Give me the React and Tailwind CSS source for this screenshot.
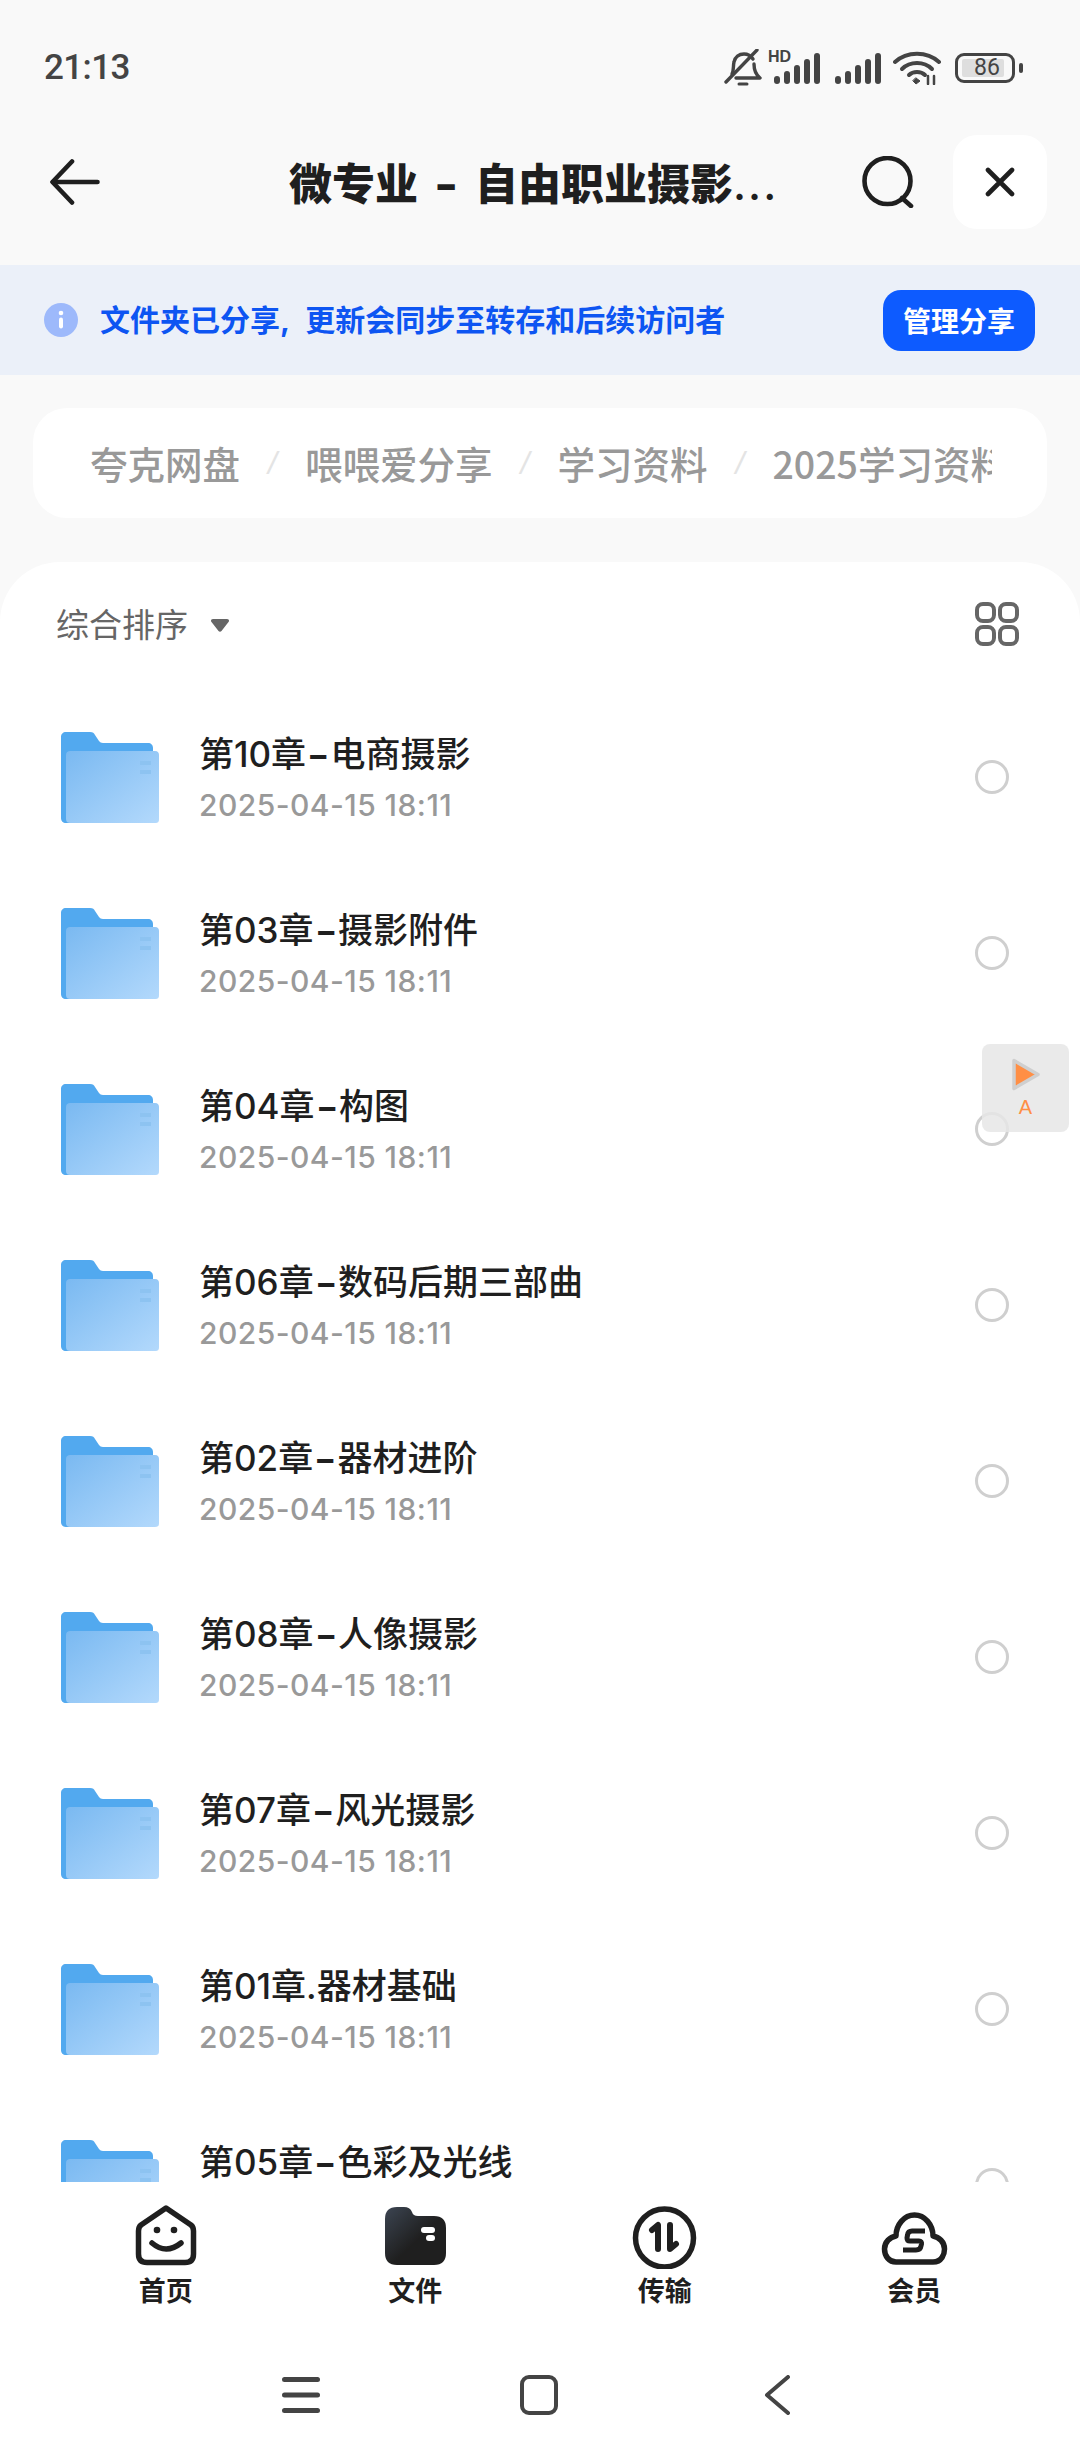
import React from "react";

const cjk = "font-['Noto_Sans_CJK_SC','Noto_Sans',sans-serif]";
const mix = "font-['Inter','Noto_Sans_CJK_SC',sans-serif]";
const files = [
  "第10章-电商摄影",
  "第03章-摄影附件",
  "第04章-构图",
  "第06章-数码后期三部曲",
  "第02章-器材进阶",
  "第08章-人像摄影",
  "第07章-风光摄影",
  "第01章.器材基础",
  "第05章-色彩及光线",
];

function Signal() {
  return (
    <svg width="50" height="32" viewBox="0 0 50 32" fill="#444">
      <rect x="3" y="24" width="6" height="8" rx="3" />
      <rect x="13" y="19" width="6" height="13" rx="3" />
      <rect x="23" y="13" width="6" height="19" rx="3" />
      <rect x="33" y="7" width="6" height="25" rx="3" />
      <rect x="43" y="1" width="6" height="31" rx="3" />
    </svg>
  );
}

function StatusBar() {
  return (
    <div className="flex h-[135px] shrink-0 items-center justify-between pl-[44px] pr-[57px]">
      <span className="font-['Roboto',sans-serif] text-[35px] font-medium leading-none tracking-[-0.6px] text-[#444]">21:13</span>
      <div className="flex items-center">
        <svg width="38" height="38" viewBox="0 0 38 38" fill="none" stroke="#444" strokeWidth="3.4" strokeLinecap="round" strokeLinejoin="round">
          <path d="M8 25C10 21 9 17 10 13C11 8 15 5 20 5C24 5 27 7 29 10" />
          <path d="M30 15C30 20 31 25 36 29H12" />
          <path d="M33 1L2 33" />
          <path d="M15 35H23" strokeWidth="3" />
        </svg>
        <div className="relative ml-[9px] flex h-[32px] w-[50px] items-end">
          <span className="absolute left-[-3px] top-[-3px] font-['Liberation_Sans',sans-serif] text-[16px] font-bold leading-[16px] text-[#444]">HD</span>
          <Signal />
        </div>
        <div className="ml-[11px]"><Signal /></div>
        <svg className="ml-[11px]" width="48" height="34" viewBox="0 0 48 34" fill="none" stroke="#444" strokeWidth="4" strokeLinecap="round">
          <path d="M2 11C14 0 34 0 46 11" />
          <path d="M9 18C17 10 31 10 39 18" />
          <path d="M16 24C20 20 28 20 32 24" />
          <path d="M20 30L23 33L27 30L23 27Z" fill="#444" strokeWidth="1" />
          <path d="M35 25V33M41 25V33" strokeWidth="2.5" />
        </svg>
        <div className="relative ml-[14px] flex h-[30px] w-[68px] items-center">
          <div className="flex h-[30px] w-[60px] items-center rounded-[9px] border-[3px] border-[#444] pl-[4px]">
            <div className="h-[18px] w-[42px] rounded-[2px] bg-[#dedede]" />
          </div>
          <div className="ml-[4px] h-[10px] w-[4px] rounded-[2px] bg-[#444]" />
          <span className="absolute left-[14px] top-0 w-[36px] text-center font-['Roboto',sans-serif] text-[23px] leading-[30px] text-[#444]">86</span>
        </div>
      </div>
    </div>
  );
}

function Header() {
  return (
    <div className="flex h-[94px] shrink-0 items-center pl-[50px] pr-[33px]">
      <svg width="50" height="46" viewBox="0 0 50 46" fill="none" stroke="#1f1f1f" strokeWidth="4.6" strokeLinecap="round" strokeLinejoin="round">
        <path d="M22 2.500L2.500 23L22 43.500" />
        <path d="M3 23H47.500" />
      </svg>
      <span className={`${mix} ml-[189px] mt-[5px] whitespace-nowrap text-[43px] font-extrabold leading-none text-[#1f1f1f] [word-spacing:7px]`}>微专业 <span className="mx-[2px] inline-block scale-x-[1.2]">-</span> 自由职业摄影<span className="font-medium tracking-[2px]">...</span></span>
      <svg className="ml-auto" width="54" height="52" viewBox="0 0 54 52" fill="none" stroke="#1f1f1f" strokeWidth="4.600" strokeLinecap="round">
        <circle cx="26.500" cy="25" r="23" />
        <path d="M41 42L50 50" />
      </svg>
      <div className="ml-[38px] flex h-[94px] w-[94px] items-center justify-center rounded-[24px] bg-white">
        <svg width="30" height="30" viewBox="0 0 30 30" fill="none" stroke="#1f1f1f" strokeWidth="4.600" strokeLinecap="round">
          <path d="M3 3L27 27M27 3L3 27" />
        </svg>
      </div>
    </div>
  );
}

function Banner() {
  return (
    <div className="mt-[36px] flex h-[110px] shrink-0 items-center bg-[#ebf0f9] pl-[44px] pr-[45px]">
      <svg width="34" height="34" viewBox="0 0 34 34">
        <circle cx="17" cy="17" r="17" fill="#9db9fb" />
        <circle cx="17" cy="10" r="2.300" fill="#fff" />
        <rect x="15" y="14.500" width="4" height="11" rx="2" fill="#fff" />
      </svg>
      <span className={`${mix} ml-[22px] whitespace-nowrap text-[30px] font-bold leading-none text-[#0d55f2] [word-spacing:9px]`}>文件夹已分享, 更新会同步至转存和后续访问者</span>
      <div className={`${cjk} ml-auto flex h-[61px] w-[152px] items-center justify-center rounded-[18px] bg-[#0d5bff] text-[28px] font-bold text-white`}>管理分享</div>
    </div>
  );
}

function Sep() {
  return <span className="w-[65px] shrink-0 text-center font-['Liberation_Sans',sans-serif] text-[32px] font-normal italic text-[#e4e4e4]">/</span>;
}

function Breadcrumb() {
  return (
    <div className="mx-[33px] mt-[33px] flex h-[110px] shrink-0 items-center rounded-[34px] bg-white pl-[57px] pr-[55px]">
      <div className={`${cjk} flex items-center overflow-hidden whitespace-nowrap text-[37.5px] font-medium leading-[56px] text-[#999]`}>
        <span className="shrink-0">夸克网盘</span>
        <Sep />
        <span className="shrink-0">喂喂爱分享</span>
        <Sep />
        <span className="shrink-0">学习资料</span>
        <Sep />
        <span className="shrink-0">2025学习资料</span>
      </div>
    </div>
  );
}

function SortRow() {
  return (
    <div className="flex h-[127px] shrink-0 items-center pl-[56px] pr-[61px]">
      <span className={`${cjk} pb-[5px] text-[33px] leading-none text-[#666]`}>综合排序</span>
      <svg className="ml-[23px]" width="18" height="13" viewBox="0 0 18 13" fill="#666">
        <path d="M2 0H16C18 0 18.500 2 17.500 3L10.500 12C9.700 13 8.300 13 7.500 12L0.500 3C-0.500 2 0 0 2 0Z" />
      </svg>
      <svg className="ml-auto -translate-y-[2px]" width="44" height="44" viewBox="0 0 44 44" fill="none" stroke="#666" strokeWidth="4">
        <rect x="2" y="2" width="17" height="17" rx="6" />
        <rect x="25" y="2" width="17" height="17" rx="6" />
        <rect x="2" y="25" width="17" height="17" rx="6" />
        <rect x="25" y="25" width="17" height="17" rx="6" />
      </svg>
    </div>
  );
}

function Folder({ id }) {
  return (
    <svg className="shrink-0" width="100" height="93" viewBox="0 0 100 93">
      <defs>
        <linearGradient id={id} x1="0" y1="0" x2="1" y2="1">
          <stop offset="0" stopColor="#7ab9f1" />
          <stop offset="1" stopColor="#b3d9fc" />
        </linearGradient>
      </defs>
      <path d="M1 6C1 3 3 1 6 1H30C33 1 34 2 35 4L39 10C40 11 41 12 43 12H88C91 12 93 14 93 17V86C93 90 91 92 88 92H6C3 92 1 90 1 87Z" fill="#52a9ef" />
      <path d="M6 24C6 21 8 20 10 20H95C98 20 99 22 99 24V88C99 91 98 92 95 92H10C8 92 6 91 6 88Z" fill={`url(#${id})`} />
      <rect x="80" y="30" width="11" height="4" fill="#8dc3f1" />
      <rect x="80" y="39" width="11" height="4" fill="#8dc3f1" />
    </svg>
  );
}

function Row({ name, i }) {
  const parts = name.split("-");
  return (
    <div className="flex h-[176px] shrink-0 items-center pl-[60px] pr-[71px]">
      <Folder id={`folder-grad-${i}`} />
      <div className="ml-[39px] flex flex-col gap-[6px]">
        <span className={`${mix} text-[35px] font-medium leading-[50px] text-[#1f1f1f]`}>
          {parts[0]}
          {parts.length > 1 && <span className="mx-[4px] inline-block scale-x-[1.4] font-bold">-</span>}
          {parts[1]}
        </span>
        <span className={`${mix} text-[30px] font-medium leading-[40px] tracking-[0.45px] text-[#999]`}>2025-04-15 18:11</span>
      </div>
      <div className="ml-auto h-[34px] w-[34px] rounded-full border-[3px] border-[#cfcfcf]" />
    </div>
  );
}

function TabBar() {
  const stroke = { fill: "none", stroke: "#1f1f1f", strokeWidth: 5.5, strokeLinecap: "round", strokeLinejoin: "round" };
  const tabs = [
    {
      label: "首页",
      icon: (
        <g {...stroke}>
          <path d="M35 3L60 20Q62.500 22 62.500 26V49Q62.500 57.500 54 57.500H16Q7.500 57.500 7.500 49V26Q7.500 22 10 20Z" />
          <circle cx="26" cy="25" r="3.300" fill="#1f1f1f" stroke="none" />
          <circle cx="43" cy="25" r="3.300" fill="#1f1f1f" stroke="none" />
          <path d="M21 38Q35 50 50 38" />
        </g>
      ),
    },
    {
      label: "文件",
      icon: (
        <g>
          <defs>
            <linearGradient id="tab-file" x1="0" y1="0" x2="1" y2="1">
              <stop offset="0" stopColor="#3c4552" />
              <stop offset="0.55" stopColor="#1f1f1f" />
            </linearGradient>
          </defs>
          <path d="M5 14Q5 2 17 2H24Q30 2 32 7Q33 11 38 11H54Q66 11 66 23V48Q66 60 54 60H17Q5 60 5 48Z" fill="url(#tab-file)" />
          <rect x="41" y="22" width="14" height="6" rx="3" fill="#fff" />
          <rect x="46" y="30" width="9" height="6" rx="3" fill="#fff" />
        </g>
      ),
    },
    {
      label: "传输",
      icon: (
        <g {...stroke}>
          <circle cx="34.500" cy="33" r="29" />
          <path d="M22 25L28 20V44" strokeWidth="6" />
          <path d="M40 20V44L46 39" strokeWidth="6" />
        </g>
      ),
    },
    {
      label: "会员",
      icon: (
        <g {...stroke}>
          <path d="M17 57H54C63 57 65.500 49 65.500 44C65.500 37 60 32 54 31C54 20 46 10 35.500 10C25 10 17 20 17 31C11 32 5.500 37 5.500 44C5.500 51 10 57 17 57Z" />
          <path d="M46 26H33Q29 26 28.500 30L28 33Q28 36 31 36H40Q43 36 42.500 39L42 41Q41.500 45 37 45H24" strokeWidth="5" strokeLinecap="butt" />
        </g>
      ),
    },
  ];
  return (
    <div className="grid grid-cols-4 px-[41px] pt-[23px]">
      {tabs.map((t) => (
        <div key={t.label} className="flex flex-col items-center">
          <svg width="70" height="64" viewBox="0 0 70 64">{t.icon}</svg>
          <span className={`${cjk} mt-[6px] text-[27px] font-bold leading-[30px] text-[#1f1f1f]`}>{t.label}</span>
        </div>
      ))}
    </div>
  );
}

function SystemNav() {
  return (
    <div className="mt-[70px] flex gap-[200px] pl-[282px]">
      <svg width="38" height="40" viewBox="0 0 38 40" fill="#444">
        <rect x="0" y="2" width="38" height="5" rx="2.500" />
        <rect x="0" y="17.500" width="38" height="5" rx="2.500" />
        <rect x="0" y="33" width="38" height="5" rx="2.500" />
      </svg>
      <svg width="38" height="40" viewBox="0 0 38 40" fill="none" stroke="#444" strokeWidth="4">
        <rect x="2" y="2" width="34" height="36" rx="7" />
      </svg>
      <svg width="38" height="40" viewBox="0 0 38 40" fill="none" stroke="#444" strokeWidth="4" strokeLinecap="round" strokeLinejoin="round">
        <path d="M30 2L9 20L30 38" />
      </svg>
    </div>
  );
}

export default function App() {
  return (
    <div className="relative flex h-[2460px] w-[1080px] flex-col overflow-hidden bg-[#f9f9f9]">
      <StatusBar />
      <Header />
      <Banner />
      <Breadcrumb />
      <div className="mt-[44px] flex min-h-0 flex-1 flex-col overflow-hidden rounded-t-[60px] bg-white">
        <SortRow />
        {files.map((name, i) => (
          <Row key={name} name={name} i={i} />
        ))}
      </div>
      <div className="h-[278px] shrink-0 bg-white">
        <TabBar />
        <SystemNav />
      </div>
      <div className="absolute left-[982px] top-[1044px] flex h-[88px] w-[87px] flex-col items-center rounded-[8px] bg-[#e6e6e6]/85 pt-[14px]">
        <svg width="30" height="33" viewBox="0 0 30 33">
          <path d="M3 2.500L27 16.500L3 30.500Z" fill="#ff8f45" stroke="#cfcfcf" strokeWidth="3.500" strokeLinejoin="round" />
        </svg>
        <span className="mt-[4px] font-['Liberation_Sans',sans-serif] text-[20px] leading-[24px] text-[#ff8f45]">A</span>
      </div>
    </div>
  );
}
